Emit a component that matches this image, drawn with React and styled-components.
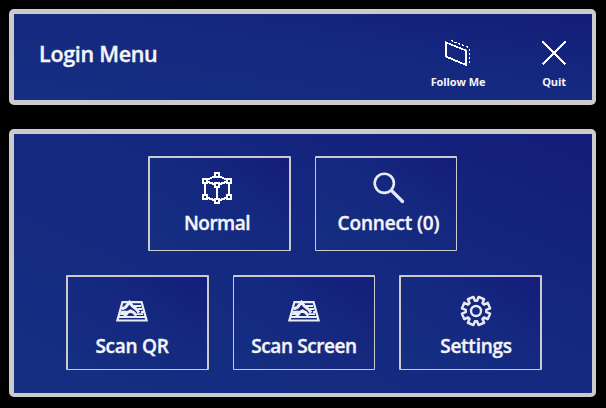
import React from "react";
import styled, { createGlobalStyle } from "styled-components";

const GlobalStyle = createGlobalStyle`
  * { box-sizing: border-box; }
  body { margin: 0; background: #000; }
`;

const blue = "linear-gradient(to top right, #152f82 0%, #14287f 60%, #141d79 100%)";

const Screen = styled.main`
  width: 606px;
  height: 408px;
  padding: 9px 10px 11px 9px;
  display: flex;
  flex-direction: column;
  gap: 24px;
  background: #000;
  color: #f4f4f8;
  font-family: "Open Sans", "Noto Sans", sans-serif;
  font-weight: 600;
  overflow: hidden;
`;

const Panel = styled.section`
  border: 5px solid #cbcbcb;
  border-right-width: 4px;
  border-bottom-width: ${(p) => p.$bottom || 5}px;
  border-radius: 5px;
  height: ${(p) => p.$height}px;
  background: ${blue} padding-box;
`;

const Header = styled(Panel)`
  display: flex;
  align-items: flex-start;
  justify-content: space-between;
  padding: 20px 11px 0 25px;
`;

const Title = styled.h1`
  margin: 4px 0 0;
  font-size: 21.5px;
  line-height: 32px;
  font-weight: 600;
  letter-spacing: -0.3px;
  -webkit-text-stroke: 0.35px currentColor;
  white-space: nowrap;
`;

const Actions = styled.div`
  display: flex;
  gap: 39px;
`;

const Action = styled.div`
  display: flex;
  flex-direction: column;
  align-items: center;
  width: ${(p) => p.$width}px;
`;

const ActionLabel = styled.span`
  margin-top: 4px;
  font-size: 11px;
  line-height: 16px;
  font-weight: 700;
  letter-spacing: -0.1px;
  white-space: nowrap;
`;

const Menu = styled(Panel)`
  display: flex;
  flex-direction: column;
  gap: 24px;
  padding-top: 22px;
`;

const Row = styled.div`
  display: flex;
  gap: 24px;
  padding-left: ${(p) => p.$indent}px;
`;

const Tile = styled.div`
  display: flex;
  flex-direction: column;
  align-items: center;
  width: ${(p) => (p.$thin ? 142 : 143)}px;
  height: 95px;
  border: solid #cbcbcb;
  border-width: ${(p) => (p.$thin ? "2px 1px 1px" : "2px 2px 1px")};
  border-radius: 1px;
  padding: ${(p) => p.$top || 12}px ${(p) => p.$right || 0}px 0 ${(p) => p.$left || 0}px;
  background: ${blue} padding-box;
`;

const IconBox = styled.div`
  display: flex;
  align-items: center;
  justify-content: center;
  height: 36px;
`;

const TileLabel = styled.span`
  font-size: 19px;
  line-height: 34px;
  letter-spacing: ${(p) => p.$spacing || -0.25}px;
  -webkit-text-stroke: 0.35px currentColor;
  white-space: nowrap;
`;

const Icon = styled.svg`
  display: block;
  flex: none;
  fill: none;
  stroke: #fff;
`;

const corners = [[16, 4], [4, 10], [28, 10], [16, 14], [4, 26], [28, 26], [16, 30]];

const CubeIcon = () => (
  <Icon width="32" height="34" viewBox="0 0 32 34" shapeRendering="crispEdges">
    <path d="M16 4 4 10v16l12 4 12-4V10zM4 10l12 4 12-4M16 14v16" strokeWidth="2" />
    {corners.map(([x, y]) => (
      <rect key={`${x}-${y}`} x={x - 2} y={y - 2} width="4" height="4" fill="#14277e" strokeWidth="2" />
    ))}
  </Icon>
);

const SearchIcon = () => (
  <Icon width="32" height="32" viewBox="0 0 32 32" opacity="0.9">
    <circle cx="11.3" cy="11.3" r="9.6" strokeWidth="2.6" />
    <path d="m18.5 18.5 11 11" strokeWidth="3.2" strokeLinecap="round" />
  </Icon>
);

const ScanIcon = () => (
  <Icon width="34" height="24" viewBox="0 0 34 24" opacity="0.92">
    <path d="M7.4 3.2h19.2l5 18.3H2.4z" strokeWidth="2.2" />
    <path d="M4 18h26M19 7h7M23 10h4M26 13h3" strokeWidth="1.9" />
    <path d="m6.5 10 4-1.7 4-5 3 3.9 4 3 2.5 3.5M5.5 13.8l6-.8M9.5 17.5l3-4 3-1.6 3 1.6 3 3" strokeWidth="3" />
    <path d="M5 15.2h5M22 15.2h6" strokeWidth="1.7" />
  </Icon>
);

const teeth = Array.from({ length: 8 }, (_, i) => {
  const base = ((i * 45 + 22.5) * Math.PI) / 180;
  return [[10.3, -0.29], [14.3, -0.21], [14.3, 0.21], [10.3, 0.29]]
    .map(([r, a]) => `${(16 + r * Math.cos(base + a)).toFixed(2)},${(16 + r * Math.sin(base + a)).toFixed(2)}`)
    .join(" ");
}).join(" ");

const GearIcon = () => (
  <Icon width="32" height="32" viewBox="0 0 32 32" opacity="0.9">
    <polygon points={teeth} strokeWidth="2.5" strokeLinejoin="round" />
    <circle cx="16" cy="16" r="5" strokeWidth="2.4" />
  </Icon>
);

const FollowIcon = () => (
  <Icon width="28" height="36" viewBox="0 0 28 36" shapeRendering="crispEdges">
    <path d="M2 8.5v14L22 31V16.5z" strokeWidth="1.8" />
    <path d="M7 6.5 25.5 14" strokeWidth="1.3" strokeDasharray="2 2" />
    <path d="M25.5 15v15" strokeWidth="1" strokeDasharray="2 2" />
  </Icon>
);

const CloseIcon = () => (
  <Icon width="28" height="36" viewBox="0 0 28 36" shapeRendering="crispEdges">
    <path d="M2.5 7.5 25.5 30.5M25.5 7.5 2.5 30.5" strokeWidth="1.8" />
  </Icon>
);

const MenuTile = ({ icon, label, spacing, ...layout }) => (
  <Tile {...layout}>
    <IconBox>{icon}</IconBox>
    <TileLabel $spacing={spacing}>{label}</TileLabel>
  </Tile>
);

export default function App() {
  return (
    <>
      <GlobalStyle />
      <Screen>
        <Header $height={96}>
          <Title>Login Menu</Title>
          <Actions>
            <Action $width={60}>
              <FollowIcon />
              <ActionLabel>Follow Me</ActionLabel>
            </Action>
            <Action $width={54}>
              <CloseIcon />
              <ActionLabel>Quit</ActionLabel>
            </Action>
          </Actions>
        </Header>
        <Menu $height={268} $bottom={4}>
          <Row $indent={134}>
            <MenuTile icon={<CubeIcon />} label="Normal" spacing={-0.5} $right={5} />
            <MenuTile icon={<SearchIcon />} label="Connect (0)" spacing={-0.15} $thin $left={5} />
          </Row>
          <Row $indent={52}>
            <MenuTile icon={<ScanIcon />} label="Scan QR" $top={16} $right={11} />
            <MenuTile icon={<ScanIcon />} label="Scan Screen" spacing={-0.4} $top={16} $thin />
            <MenuTile icon={<GearIcon />} label="Settings" $top={16} $left={11} />
          </Row>
        </Menu>
      </Screen>
    </>
  );
}
